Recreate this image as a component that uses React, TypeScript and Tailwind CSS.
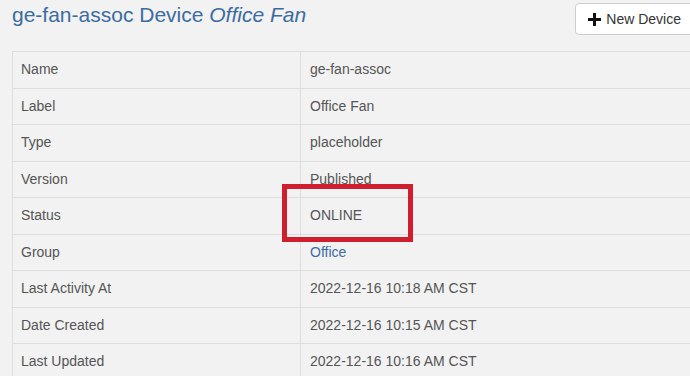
import React from "react";

const rows: { label: string; value: string; link?: boolean }[] = [
  { label: "Name", value: "ge-fan-assoc" },
  { label: "Label", value: "Office Fan" },
  { label: "Type", value: "placeholder" },
  { label: "Version", value: "Published" },
  { label: "Status", value: "ONLINE" },
  { label: "Group", value: "Office", link: true },
  { label: "Last Activity At", value: "2022-12-16 10:18 AM CST" },
  { label: "Date Created", value: "2022-12-16 10:15 AM CST" },
  { label: "Last Updated", value: "2022-12-16 10:16 AM CST" },
];

export default function App() {
  return (
    <div className="relative w-[690px] h-[376px] overflow-hidden bg-[#f2f2f2] font-['Liberation_Sans',Arial,sans-serif]">
      <div className="flex justify-between items-start pl-3 pt-[1px] h-[51px]">
        <h1 className="text-[21px] leading-7 text-[#3b6ca1]">
          ge-fan-assoc Device <i>Office Fan</i>
        </h1>
        <button className="mt-[2px] -mr-[20px] h-8 flex items-center gap-[5px] pl-3 pr-7 bg-white border border-[#cccccc] rounded text-[14px] text-[#333]">
          <svg width="13" height="13" viewBox="0 0 13 13">
            <path d="M5 0h3v5h5v3H8v5H5V8H0V5h5z" fill="#111" />
          </svg>
          New Device
        </button>
      </div>

      <div className="ml-3 w-[700px] border-l border-t border-[#dddddd] text-[14px] text-[#555]">
        {rows.map((r) => (
          <div
            key={r.label}
            className="grid grid-cols-[288px_1fr] h-[36.5px] border-b border-[#dddddd]"
          >
            <div className="flex items-center pl-2 border-r border-[#dddddd]">{r.label}</div>
            <div className={`flex items-center pl-[9px] ${r.link ? "text-[#3b6ca1]" : ""}`}>
              {r.value}
            </div>
          </div>
        ))}
      </div>

      <div className="absolute left-[282px] top-[184px] w-[131px] h-[58px] border-[5px] border-[#cf1f2e]" />
    </div>
  );
}
